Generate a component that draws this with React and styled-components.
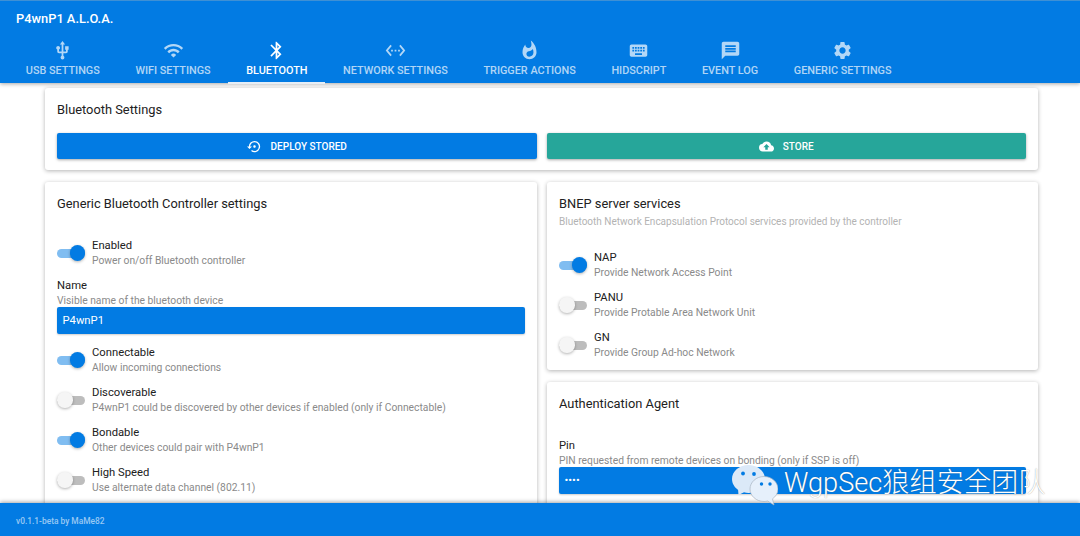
import React from "react";
import styled, { createGlobalStyle } from "styled-components";
import {
  MdUsb,
  MdWifi,
  MdBluetooth,
  MdSettingsEthernet,
  MdWhatshot,
  MdKeyboard,
  MdMessage,
  MdSettings,
  MdSettingsBackupRestore,
  MdCloudUpload,
} from "react-icons/md";

const PRIMARY = "#027be3";

const GlobalStyle = createGlobalStyle`
  html, body {
    margin: 0;
    padding: 0;
    background: #fff;
    font-family: Roboto, "Liberation Sans", sans-serif;
    overflow: hidden;
  }
`;

const Layout = styled.div`
  position: relative;
  display: flex;
  flex-direction: column;
  height: 100vh;
  overflow: hidden;
`;

const Header = styled.header`
  position: relative;
  z-index: 2;
  flex: none;
  height: 83px;
  box-sizing: border-box;
  border-top: 1px solid #3f90d4;
  background: ${PRIMARY};
  color: #fff;
  box-shadow: 0 1px 4px rgba(0, 0, 0, 0.35);
`;

const Title = styled.div`
  height: 36px;
  padding-left: 16px;
  font-size: 12.85px;
  font-weight: 500;
  line-height: 35px;
`;

const Tabs = styled.nav`
  display: flex;
  padding-left: 8px;
`;

const Tab = styled.div`
  position: relative;
  display: flex;
  flex-direction: column;
  align-items: center;
  height: 46px;
  padding: 0 17.8px;
  color: ${(p) => (p.$active ? "#fff" : "rgba(255, 255, 255, 0.7)")};

  svg {
    display: block;
    width: 21px;
    height: 21px;
    margin-top: 3px;
  }

  span {
    margin-top: 2px;
    font-size: 10.85px;
    font-weight: 500;
    line-height: 16px;
    white-space: nowrap;
  }

  ${(p) =>
    p.$active &&
    `&::after {
      content: "";
      position: absolute;
      left: 0;
      right: 0;
      bottom: -1px;
      height: 2px;
      background: #e6eef6;
    }`}
`;

const Main = styled.main`
  flex: 1;
  min-height: 0;
  overflow: hidden;
  display: flex;
  flex-direction: column;
  gap: 12px;
  padding: 5px 42px 0 45px;
`;

const Card = styled.section`
  flex: none;
  box-sizing: border-box;
  padding: 12px 12px ${(p) => p.$bottom ?? 12}px;
  background: #fff;
  border-radius: 3px;
  box-shadow: 0 1px 4px rgba(0, 0, 0, 0.3);
`;

const CardTitle = styled.h2`
  margin: 0;
  color: #212121;
  font-size: 12.85px;
  font-weight: 400;
  line-height: 19px;
`;

const CardSubtitle = styled.div`
  margin-top: 1px;
  color: #b3b3b3;
  font-size: 10px;
  line-height: 16px;
`;

const ActionRow = styled.div`
  display: grid;
  grid-template-columns: 1fr 1fr;
  gap: 10px;
  margin-top: 14px;
`;

const ActionButton = styled.button`
  display: flex;
  align-items: center;
  justify-content: center;
  gap: 9px;
  height: 26px;
  padding: 0;
  border: 0;
  border-radius: 2px;
  background: ${(p) => p.$color};
  color: #fff;
  font-family: inherit;
  font-size: 10px;
  font-weight: 500;
  box-shadow: 0 1px 3px rgba(0, 0, 0, 0.35);

  svg {
    width: 15px;
    height: 15px;
  }
`;

const Columns = styled.div`
  display: grid;
  grid-template-columns: 492px 491px;
  gap: 10px;
  align-items: start;
`;

const Column = styled.div`
  display: flex;
  flex-direction: column;
  gap: 12px;
`;

const Options = styled.div`
  display: flex;
  flex-direction: column;
  margin-top: ${(p) => p.$top}px;
`;

const OptionRow = styled.div`
  display: flex;
  align-items: center;
  height: 40px;
`;

const Track = styled.div`
  position: relative;
  flex: none;
  width: 28px;
  height: 9px;
  margin-right: 7px;
  border-radius: 4.5px;
  background: ${(p) => (p.$on ? "#80bdf1" : "#bdbdbd")};
`;

const Thumb = styled.div`
  position: absolute;
  top: -3.5px;
  left: ${(p) => (p.$on ? "12.5px" : "0")};
  width: 15.5px;
  height: 15.5px;
  border-radius: 50%;
  background: ${(p) => (p.$on ? PRIMARY : "#f5f5f5")};
  box-shadow: 0 1px 3px rgba(0, 0, 0, 0.3);
`;

const OptionLabel = styled.div`
  color: #212121;
  font-size: 11.25px;
  line-height: 15px;
`;

const Hint = styled.div`
  color: #8a8a8a;
  font-size: 10.3px;
  line-height: 15px;
`;

const Field = styled.div`
  margin-top: ${(p) => p.$top}px;
`;

const FieldInput = styled.div`
  box-sizing: border-box;
  height: 27px;
  margin-top: -1px;
  padding-left: 5.5px;
  border-radius: 2px;
  background: ${PRIMARY};
  color: #fff;
  font-size: 11.25px;
  line-height: 28px;
  box-shadow: 0 1px 2px rgba(0, 0, 0, 0.2);
`;

const Footer = styled.footer`
  position: relative;
  z-index: 2;
  flex: none;
  height: 33px;
  padding-left: 16px;
  background: ${PRIMARY};
  color: rgba(255, 255, 255, 0.6);
  font-size: 8.4px;
  font-weight: 500;
  line-height: 36px;
  box-shadow: 0 -1px 4px rgba(0, 0, 0, 0.35);
`;

const Watermark = styled.div`
  position: absolute;
  z-index: 3;
  left: 732px;
  top: 465px;
  display: flex;
  align-items: flex-start;
  gap: 6px;
  color: #fff;
  font-family: Roboto, "Noto Sans CJK SC", sans-serif;
  font-size: 27.2px;
  font-weight: 300;
  line-height: 37px;
  white-space: nowrap;
  text-shadow: 0 0 1px rgba(60, 60, 60, 0.55);

  svg {
    flex: none;
  }
`;

const tabs = [
  { label: "USB SETTINGS", icon: <MdUsb /> },
  { label: "WIFI SETTINGS", icon: <MdWifi /> },
  { label: "BLUETOOTH", icon: <MdBluetooth />, active: true },
  { label: "NETWORK SETTINGS", icon: <MdSettingsEthernet /> },
  { label: "TRIGGER ACTIONS", icon: <MdWhatshot /> },
  { label: "HIDSCRIPT", icon: <MdKeyboard /> },
  { label: "EVENT LOG", icon: <MdMessage /> },
  { label: "GENERIC SETTINGS", icon: <MdSettings /> },
];

function Option({ on, label, hint }) {
  return (
    <OptionRow>
      <Track $on={on}>
        <Thumb $on={on} />
      </Track>
      <div>
        <OptionLabel>{label}</OptionLabel>
        <Hint>{hint}</Hint>
      </div>
    </OptionRow>
  );
}

function WeChatLogo() {
  return (
    <svg width="46" height="41" viewBox="0 0 46 41">
      <path
        d="M16.500 0C7.400 0 0 6.300 0 14c0 4.400 2.400 8.300 6.100 10.900L6.500 30l5.500-2.700c1.400.4 2.900.7 4.500.7 9.100 0 16.500-6.300 16.500-14S25.600 0 16.500 0z"
        fill="#dbe9f8"
      />
      <circle cx="11" cy="8.500" r="1.900" fill={PRIMARY} />
      <circle cx="22" cy="9" r="1.900" fill={PRIMARY} />
      <path
        d="M32 11.500c-7.700 0-14 5.600-14 12.500s6.300 12.500 14 12.500c1.300 0 2.500-.2 3.700-.5L42 40l-1.500-6.200c3.400-2.300 5.500-5.800 5.500-9.800 0-6.900-6.300-12.500-14-12.500z"
        fill="#e6f0fb"
        stroke="#a9b5c1"
        strokeWidth=".7"
      />
      <circle cx="29.500" cy="19" r="1.700" fill={PRIMARY} />
      <circle cx="38" cy="19" r="1.700" fill={PRIMARY} />
    </svg>
  );
}

export default function App() {
  return (
    <Layout>
      <GlobalStyle />
      <Header>
        <Title>P4wnP1 A.L.O.A.</Title>
        <Tabs>
          {tabs.map((t) => (
            <Tab key={t.label} $active={t.active}>
              {t.icon}
              <span>{t.label}</span>
            </Tab>
          ))}
        </Tabs>
      </Header>

      <Main>
        <Card $bottom={11}>
          <CardTitle>Bluetooth Settings</CardTitle>
          <ActionRow>
            <ActionButton $color={PRIMARY}>
              <MdSettingsBackupRestore />
              DEPLOY STORED
            </ActionButton>
            <ActionButton $color="#26a69a">
              <MdCloudUpload />
              STORE
            </ActionButton>
          </ActionRow>
        </Card>

        <Columns>
          <Column>
            <Card>
              <CardTitle>Generic Bluetooth Controller settings</CardTitle>
              <Options $top={20}>
                <Option on label="Enabled" hint="Power on/off Bluetooth controller" />
              </Options>
              <Field $top={5}>
                <OptionLabel>Name</OptionLabel>
                <Hint>Visible name of the bluetooth device</Hint>
                <FieldInput>P4wnP1</FieldInput>
              </Field>
              <Options $top={6}>
                <Option on label="Connectable" hint="Allow incoming connections" />
                <Option
                  label="Discoverable"
                  hint="P4wnP1 could be discovered by other devices if enabled (only if Connectable)"
                />
                <Option on label="Bondable" hint="Other devices could pair with P4wnP1" />
                <Option label="High Speed" hint="Use alternate data channel (802.11)" />
              </Options>
            </Card>
          </Column>

          <Column>
            <Card $bottom={5}>
              <CardTitle>BNEP server services</CardTitle>
              <CardSubtitle>
                Bluetooth Network Encapsulation Protocol services provided by the controller
              </CardSubtitle>
              <Options $top={15}>
                <Option on label="NAP" hint="Provide Network Access Point" />
                <Option label="PANU" hint="Provide Protable Area Network Unit" />
                <Option label="GN" hint="Provide Group Ad-hoc Network" />
              </Options>
            </Card>
            <Card>
              <CardTitle>Authentication Agent</CardTitle>
              <Field $top={25}>
                <OptionLabel>Pin</OptionLabel>
                <Hint>PIN requested from remote devices on bonding (only if SSP is off)</Hint>
                <FieldInput>••••</FieldInput>
              </Field>
            </Card>
          </Column>
        </Columns>
      </Main>

      <Footer>v0.1.1-beta by MaMe82</Footer>

      <Watermark>
        <WeChatLogo />
        WgpSec狼组安全团队
      </Watermark>
    </Layout>
  );
}
